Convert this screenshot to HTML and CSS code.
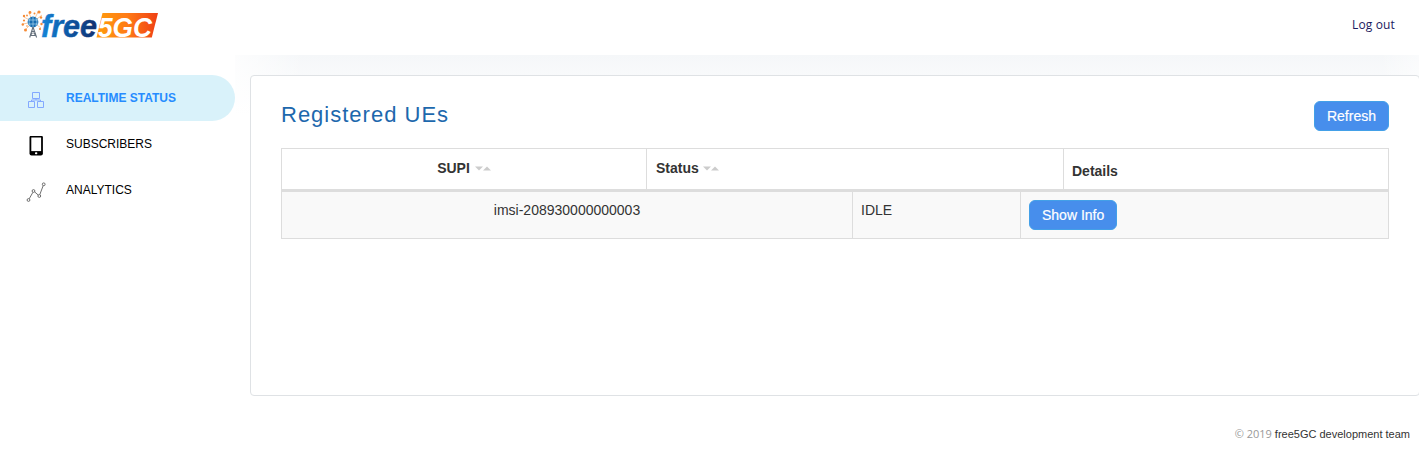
FILE: index.html
```html
<!DOCTYPE html>
<html lang="en">
<head>
<meta charset="utf-8">
<title>free5GC</title>
<link rel="stylesheet" href="styles.css">
</head>
<body>
<header class="header">
  <svg class="logo" width="140" height="32" viewBox="20 8 140 32" role="img" aria-label="free5GC">
    <defs>
      <linearGradient id="blue" x1="0" x2="1"><stop offset="0" stop-color="#1687d9"/><stop offset=".45" stop-color="#0d5ba9"/><stop offset="1" stop-color="#12306f"/></linearGradient>
      <linearGradient id="orange" x1="0" x2="1"><stop offset="0" stop-color="#ff9c0b"/><stop offset=".5" stop-color="#ff7b16"/><stop offset="1" stop-color="#ef3f14"/></linearGradient>
    </defs>
    <g stroke="#f7a25c" stroke-width=".6" fill="none">
      <path d="M33 22L24 17M33 22L29 13M33 22L38 12M33 22L42 15M33 22L41 28M33 22L23 24M33 22L26 29"/>
    </g>
    <g fill="#f68b35">
      <circle cx="24" cy="16" r="1.2"/><circle cx="30" cy="12.5" r="1.4"/><circle cx="34.5" cy="13.5" r="1"/><circle cx="39" cy="12" r="1.6"/><circle cx="41" cy="17.5" r="1.2"/><circle cx="24" cy="20.5" r="1.1"/><circle cx="22.8" cy="24.5" r="1.2"/><circle cx="25.5" cy="30" r="1.5"/><circle cx="41.5" cy="24" r="1.2"/><circle cx="40" cy="29" r="1.1"/><circle cx="27" cy="15.5" r=".9"/><circle cx="27" cy="26" r=".8"/>
    </g>
    <circle cx="33" cy="22" r="5.4" fill="#176db1"/>
    <path d="M28 20h10M28 24h10M33 17v10M30 18q-2 4 0 8M36 18q2 4 0 8" stroke="#a9d6ef" stroke-width=".7" fill="none"/>
    <path d="M33 27L29.7 37.5M33 27l3.6 10.500M31.800 30.500l4 5M34.300 30.500l-4 5M30.500 35.500h5.400" stroke="#66717d" stroke-width="1.100" fill="none"/>
    <text class="logo-free" x="41" y="37.300" textLength="56" lengthAdjust="spacingAndGlyphs" fill="url(#blue)" stroke="url(#blue)">free</text>
    <path d="M102.500 13H158L151.800 37.500H96.500z" fill="url(#orange)"/>
    <text class="logo-gc" x="98" y="36.900" textLength="54" lengthAdjust="spacingAndGlyphs">5GC</text>
  </svg>
  <a class="logout">Log out</a>
</header>
<div class="body">
  <nav class="sidebar">
    <a class="item active">
      <svg width="20" height="20" viewBox="26 90 20 20" fill="none" stroke="#83a9ff" stroke-width="1"><path d="M32.500 92.500h7v6h-7zM28.500 101.500h6v6h-6zM37.500 101.500h6v6h-6zM36 98.500v1.500M31.500 101.500v-1.500h9v1.500"/></svg>
      <span>REALTIME STATUS</span>
    </a>
    <a class="item">
      <svg width="20" height="20" viewBox="26 136 20 20"><rect x="29.500" y="135.500" width="13.400" height="20" rx="2" fill="#000"/><path d="M31.300 137.500h9.800v13.600h-9.800z" fill="#fff"/><rect x="35" y="152.200" width="2.300" height="2" rx=".8" fill="#fff"/></svg>
      <span>SUBSCRIBERS</span>
    </a>
    <a class="item">
      <svg width="20" height="20" viewBox="26 182 20 20" fill="none" stroke="#606060" stroke-width=".9"><circle cx="28.500" cy="200" r="1.400"/><circle cx="33.500" cy="191" r="1.400"/><circle cx="39.300" cy="196" r="1.400"/><circle cx="43.700" cy="184.300" r="1.400"/><path d="M29.200 198.800l3.700-6.500M34.600 191.900l3.600 3.100M39.800 194.600l3.400-9"/></svg>
      <span>ANALYTICS</span>
    </a>
  </nav>
  <main class="main">
    <section class="card">
      <div class="card-head"><h2>Registered UEs</h2><button class="btn">Refresh</button></div>
      <div class="grid">
        <div class="row head">
          <div class="center">SUPI<svg class="sort" width="16" height="5" viewBox="0 0 16 5"><path d="M0 .5h8l-4 4zM8 4.500h8l-4-4z"/></svg></div>
          <div>Status<svg class="sort" width="16" height="5" viewBox="0 0 16 5"><path d="M0 .5h8l-4 4zM8 4.500h8l-4-4z"/></svg></div>
          <div class="details">Details</div>
        </div>
        <div class="row data">
          <div class="center">imsi-208930000000003</div>
          <div>IDLE</div>
          <div><button class="btn">Show Info</button></div>
        </div>
      </div>
    </section>
    <footer class="footer"><span>© 2019</span> free5GC development team</footer>
  </main>
</div>
</body>
</html>
```
FILE: styles.css
```css
* { box-sizing: border-box; }
body { margin: 0; height: 457px; overflow: hidden; background: #fff; font-family: "Liberation Sans", Arial, sans-serif; font-size: 14px; color: #333; }
.header { height: 55px; display: flex; justify-content: space-between; padding: 8px 24px 0 20px; }
.logo { overflow: visible; }
.logo-free { font: italic 700 32px "Liberation Sans", Arial, sans-serif; stroke-width: .5px; }
.logo-gc { font: italic 700 28.5px "Liberation Sans", Arial, sans-serif; fill: #fff; }
.logout { font: 500 12px/16px "Open Sans", sans-serif; color: #1c1a5e; padding-top: 9px; letter-spacing: .15px; }
.body { display: flex; height: 402px; }
.sidebar { width: 235px; padding-top: 20px; flex: none; }
.item { display: flex; height: 46px; padding: 15px 0 0 26px; font-size: 12px; line-height: 16px; color: #000; border-radius: 0 23px 23px 0; }
.item svg { flex: none; margin-right: 20px; }
.active { background: #d9f2fa; color: #268cff; font-weight: 700; }
.main {
  flex: 1; min-width: 0; padding: 20px 0 0 15px;
  background: linear-gradient(90deg, rgba(255, 255, 255, .75), transparent 70px, transparent calc(100% - 40px), rgba(255, 255, 255, .5)) top / 100% 60px no-repeat, linear-gradient(#f5f7f9, #fff 60px);
}
.card { height: 321px; margin-right: -1px; border: 1px solid #dfe2e5; border-radius: 4px; background: #fff; padding: 25px 30px 0 30px; }
.card-head { display: flex; justify-content: space-between; height: 47px; }
h2 { margin: 0; font-size: 22px; line-height: 27px; font-weight: 400; letter-spacing: 1px; color: #1d68ad; }
.btn { height: 30px; border: 1px solid #43a0e8; border-radius: 6px; background: #478eec; color: #fff; font: 14px/20px "Liberation Sans", Arial, sans-serif; padding: 4px 12px; -webkit-text-stroke: .2px #fff; }
.grid { border: 1px solid #ddd; }
.row { display: grid; }
.row > div { padding: 8px; border-left: 1px solid #ddd; line-height: 20px; }
.row > div:first-child { border-left: 0; }
.head { grid-template-columns: 364px 417px 1fr; height: 43px; border-bottom: 3px solid #ddd; font-weight: 700; }
.head > div { padding: 9px 9px 0; }
.head > .details { padding: 12px 8px 0; }
.data { grid-template-columns: 570px 168px 1fr; height: 46px; background: #f9f9f9; }
.row > .center { text-align: center; }
.sort { margin: 0 0 2px 5px; fill: #ccc; vertical-align: baseline; }
.head > div:nth-child(2) .sort { margin-left: 4px; }
.footer { font-size: 11px; line-height: 16px; text-align: right; padding: 30px 9px 0 0; }
.footer span { font-family: "Open Sans", sans-serif; color: #999; }
```
